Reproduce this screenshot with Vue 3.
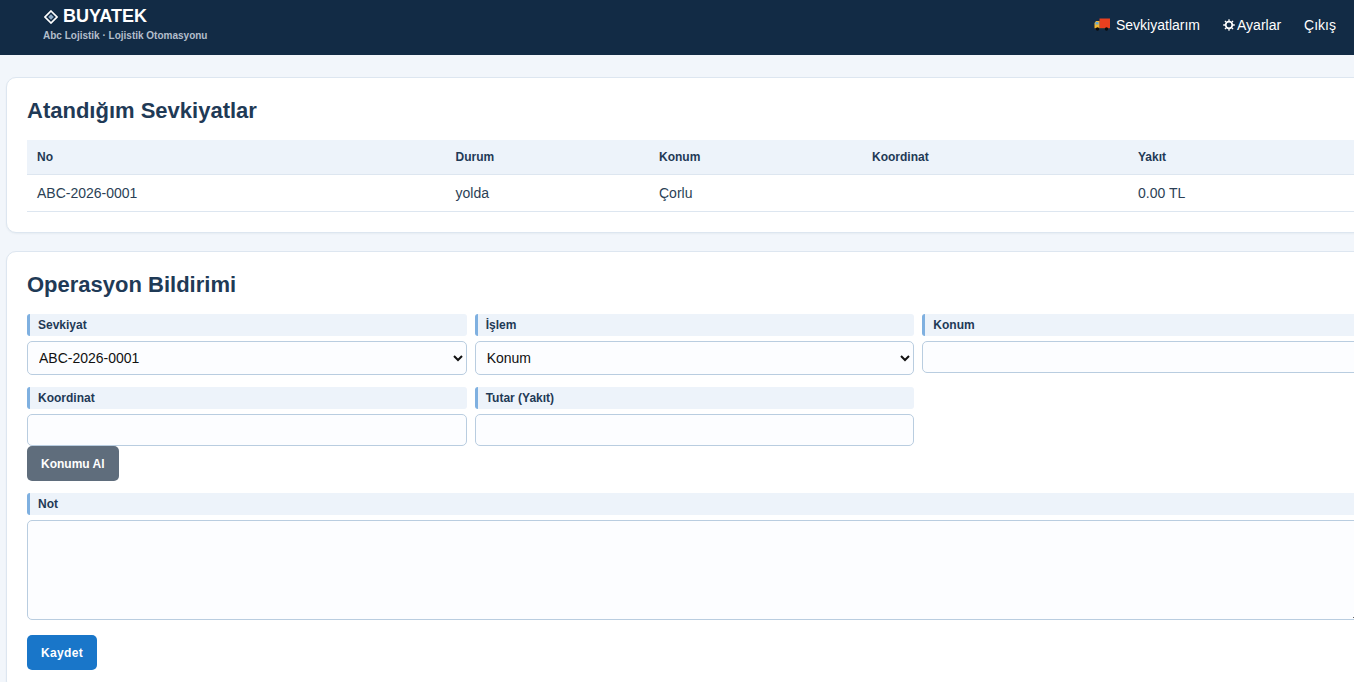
<script setup>
const columns = ['No', 'Durum', 'Konum', 'Koordinat', 'Yakıt']
const row = ['ABC-2026-0001', 'yolda', 'Çorlu', '', '0.00 TL']
</script>

<template>
  <div class="page">
    <header class="topbar">
      <div class="brand">
        <div class="brand-name">
          <svg class="brand-mark" viewBox="0 0 14 14" width="14" height="14">
            <path d="M7 1 13 7 7 13 1 7z" fill="none" stroke="#fff" stroke-width="1.7" />
            <path d="M7 4.2 9.8 7 7 9.8 4.2 7z" fill="#8fabc6" />
          </svg>
          <span>BUYATEK</span>
        </div>
        <div class="brand-sub">Abc Lojistik · Lojistik Otomasyonu</div>
      </div>
      <nav class="nav">
        <a class="nav-link">
          <svg class="truck" viewBox="0 0 16 13" width="16" height="13">
            <rect x="5.5" y="0.5" width="10.5" height="9.5" fill="#e8401f" />
            <path d="M0.5 10V5L2 3h3.5v7z" fill="#f2b632" />
            <rect x="1.5" y="4" width="3" height="2.5" fill="#5fa8d8" />
            <rect x="0" y="10" width="16" height="1.2" fill="#3a3a3a" />
            <circle cx="3.5" cy="11" r="1.7" fill="#0c0c0c" />
            <circle cx="12.5" cy="11" r="1.7" fill="#0c0c0c" />
          </svg>
          <span>Sevkiyatlarım</span>
        </a>
        <a class="nav-link tight">
          <svg class="gear" viewBox="0 0 12 12" width="12" height="12">
            <circle cx="6" cy="6" r="3.3" fill="none" stroke="#fff" stroke-width="1.7" />
            <path d="M6 .2v2M6 9.8v2M.2 6h2M9.8 6h2M1.9 1.9l1.4 1.4M8.7 8.7l1.4 1.4M10.1 1.9 8.7 3.3M3.3 8.7l-1.4 1.4" stroke="#fff" stroke-width="1.3" />
          </svg>
          <span>Ayarlar</span>
        </a>
        <a class="nav-link">Çıkış</a>
      </nav>
    </header>

    <main class="content">
      <section class="card">
        <h2>Atandığım Sevkiyatlar</h2>
        <table>
          <colgroup>
            <col class="c1" /><col class="c2" /><col class="c3" /><col class="c4" /><col />
          </colgroup>
          <thead>
            <tr><th v-for="c in columns" :key="c">{{ c }}</th></tr>
          </thead>
          <tbody>
            <tr><td v-for="(v, i) in row" :key="i">{{ v }}</td></tr>
          </tbody>
        </table>
      </section>

      <section class="card">
        <h2>Operasyon Bildirimi</h2>
        <form class="form" @submit.prevent>
          <div class="field">
            <label>Sevkiyat</label>
            <select><option>ABC-2026-0001</option></select>
          </div>
          <div class="field">
            <label>İşlem</label>
            <select><option>Konum</option></select>
          </div>
          <div class="field">
            <label>Konum</label>
            <input type="text" />
          </div>
          <div class="field">
            <label>Koordinat</label>
            <input type="text" />
            <button type="button" class="btn grey">Konumu Al</button>
          </div>
          <div class="field">
            <label>Tutar (Yakıt)</label>
            <input type="text" />
          </div>
          <div class="field wide">
            <label>Not</label>
            <textarea></textarea>
          </div>
          <div class="wide">
            <button type="submit" class="btn blue">Kaydet</button>
          </div>
        </form>
      </section>
    </main>
  </div>
</template>

<style>
html, body { margin: 0; overflow: hidden; height: 100%; background: #f2f6fb; }
</style>

<style scoped>
.page {
  font-family: "Liberation Sans", Arial, sans-serif;
  color: #1f2d3d;
  height: 682px;
  overflow: hidden;
  background: #f2f6fb;
}
.topbar {
  height: 55px;
  box-sizing: border-box;
  background: #122b45;
  color: #fff;
  display: flex;
  justify-content: space-between;
  align-items: center;
  padding: 0 18px 0 43px;
}
.brand { margin-top: -6px; }
.brand-name { display: flex; align-items: center; gap: 5px; font-size: 18px; font-weight: 700; line-height: 18px; }
.brand-mark { margin: 2px 0 0 1px; }
.brand-sub { font-size: 10px; font-weight: 700; line-height: 13px; margin-top: 4px; color: #b3becb; }
.nav { display: flex; gap: 23px; font-size: 14px; align-items: center; margin-top: -6px; }
.nav-link { display: flex; align-items: center; gap: 6px; color: #fff; }
.nav-link.tight { gap: 2px; }
.content { width: 1377px; padding: 22px 0 0 6px; }
.card {
  background: #fff;
  border: 1px solid #dde6f0;
  border-radius: 10px;
  padding: 20px;
  margin-bottom: 18px;
  box-shadow: 0 1px 2px rgba(20, 50, 80, .05);
}
h2 {
  margin: 0 0 17px;
  font-size: 22px;
  line-height: 25px;
  font-weight: 700;
  color: #1f3a56;
}
table { width: 100%; border-collapse: collapse; table-layout: fixed; font-size: 14px; }
.c1 { width: 418.5px; }
.c2 { width: 203.5px; }
.c3 { width: 213px; }
.c4 { width: 266px; }
th {
  background: #edf3fa;
  height: 34px;
  padding: 0 10px;
  text-align: left;
  font-size: 12px;
  font-weight: 700;
  color: #1f3a56;
  border-bottom: 1px solid #dde6f0;
}
td {
  height: 36px;
  padding: 0 10px;
  color: #2b3f55;
  border-bottom: 1px solid #dde6f0;
}
.form { display: grid; grid-template-columns: repeat(3, minmax(0, 1fr)); gap: 12px 8px; align-items: start; }
.wide { grid-column: 1 / -1; }
.field { display: flex; flex-direction: column; align-items: stretch; }
.field.wide { padding-bottom: 3px; }
label {
  height: 22px;
  line-height: 22px;
  box-sizing: border-box;
  margin-bottom: 5px;
  padding-left: 8px;
  background: #edf3fa;
  border-left: 3px solid #7fb0e0;
  border-radius: 3px;
  font-size: 12px;
  font-weight: 700;
  color: #1f3a56;
}
input, select, textarea {
  box-sizing: border-box;
  width: 100%;
  border: 1px solid #b9cde0;
  border-radius: 5px;
  background: #fcfdff;
  font-family: inherit;
  font-size: 14px;
  color: #111;
  margin: 0;
  outline: none;
}
input { height: 32px; padding: 0 8px; }
select { height: 34px; padding: 0 7px; }
textarea { height: 100px; padding: 8px; resize: vertical; display: block; }
.btn {
  height: 35px;
  box-sizing: border-box;
  border: 0;
  border-radius: 5px;
  padding: 0 14px;
  font-family: inherit;
  font-size: 12px;
  font-weight: 700;
  color: #fff;
  cursor: pointer;
}
.field > .btn { align-self: flex-start; }
.grey { background: #5f6d7c; }
.blue { background: #1976c9; display: block; letter-spacing: .33px; }
</style>
